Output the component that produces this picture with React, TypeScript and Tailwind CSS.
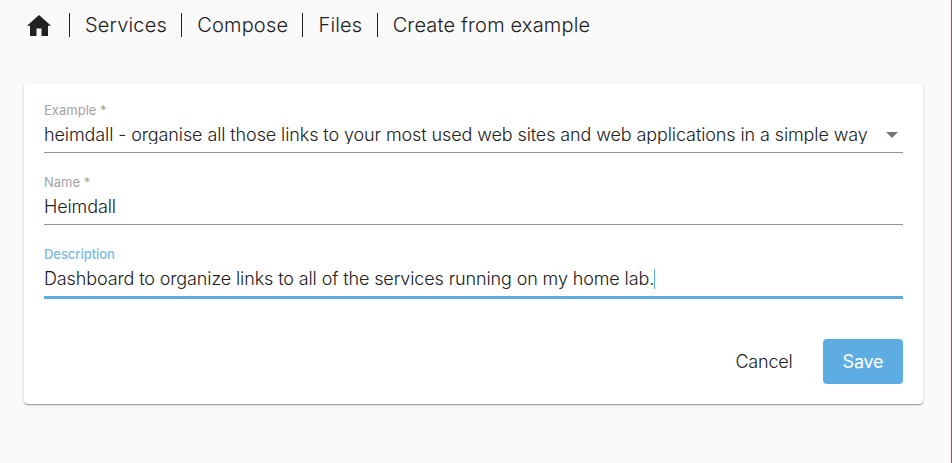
import React from "react";

const crumbs = ["Services", "Compose", "Files", "Create from example"];

export default function App() {
  return (
    <div className="h-[463px] w-[952px] overflow-hidden border-r border-[#dc3545] bg-[#fafafa] font-['Inter',sans-serif] text-[#212121]">
      <nav className="flex h-[50px] items-center pl-[27px] text-[20px] font-light tracking-[0.17px]">
        <svg viewBox="0 0 24 21" className="mr-[18px] h-[21px] w-6 fill-[#212121]">
          <path d="M12 0 24 10.8h-3V21h-6.5v-7.5h-5V21H3V10.8H0z" />
        </svg>
        {crumbs.map((c) => (
          <span key={c} className="flex items-center">
            <span className="mr-[15px] h-6 w-px bg-[#212121]" />
            <span className="mr-[14.3px]">{c}</span>
          </span>
        ))}
      </nav>
      <main className="mx-6 mt-[33px] h-[321px] w-[899px] rounded bg-white px-5 pt-5 shadow-[0_1px_1px_rgba(0,0,0,0.33),0_1px_3px_rgba(0,0,0,0.14)]">
        <div className="h-[50px] border-b border-[#949494]">
          <div className="text-[13px] leading-[15px] tracking-[0.02px] text-[#a3a3a3]">Example *</div>
          <div className="flex h-[34px] items-center justify-between text-[18px] font-light tracking-[-0.105px]">
            <span className="h-[18px] overflow-hidden leading-[18px] whitespace-nowrap">heimdall - organise all those links to your most used web sites and web applications in a simple way</span>
            <span className="mr-[5px] border-x-[6px] border-t-[6px] border-x-transparent border-t-[#757575]" />
          </div>
        </div>
        <div className="mt-[22px] h-[50px] border-b border-[#949494]">
          <div className="text-[13px] leading-[15px] text-[#a3a3a3]">Name *</div>
          <div className="text-[18px] leading-[34px] font-light tracking-[-0.12px]">Heimdall</div>
        </div>
        <div className="mt-[22px] h-[52px] border-b-[3px] border-[#5dade2]">
          <div className="text-[13px] leading-[15px] font-medium tracking-[-0.05px] text-[#7abbe6]">Description</div>
          <div className="flex items-center text-[18px] leading-[34px] font-light tracking-[-0.12px]">
            <span>Dashboard to organize links to all of the services running on my home lab.</span>
            <span className="h-5 w-px bg-[#5dade2]" />
          </div>
        </div>
        <div className="mt-10 flex items-center justify-end text-[18px] font-light tracking-[-0.2px]">
          <button className="mr-[30.5px]">Cancel</button>
          <button className="h-[45px] w-20 rounded bg-[#5dade2] font-normal text-white">Save</button>
        </div>
      </main>
    </div>
  );
}
